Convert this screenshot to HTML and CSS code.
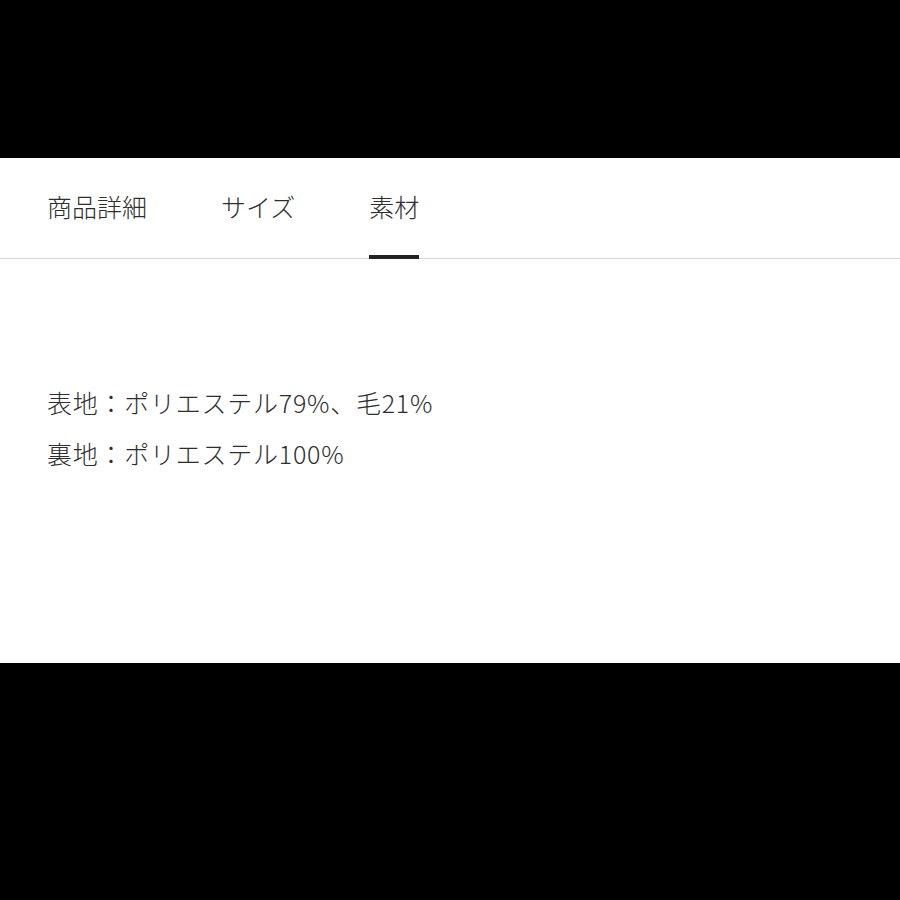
FILE: index.html
```html
<!DOCTYPE html>
<html lang="ja">
<head>
<meta charset="utf-8">
<link rel="stylesheet" href="styles.css">
</head>
<body>
<div class="top"></div>
<div class="panel">
  <div class="tabs">
    <div class="tab">商品詳細</div>
    <div class="tab">サイズ</div>
    <div class="tab active">素材</div>
  </div>
  <div class="content">
    <p class="line">表地：ポリエステル79%、毛21%</p>
    <p class="line">裏地：ポリエステル100%</p>
  </div>
</div>
</body>
</html>
```
FILE: styles.css
```css
html, body {
  margin: 0;
  padding: 0;
  background: #000;
}
body {
  font-family: "Noto Sans CJK JP", "Noto Sans", sans-serif;
  font-weight: 300;
  color: #2e2e2e;
}
.top {
  height: 158px;
}
.panel {
  background: #fff;
  height: 505px;
}
.tabs {
  display: flex;
  gap: 74px;
  padding-left: 47px;
  height: 100px;
  border-bottom: 1px solid #d4d4d4;
}
.tab {
  font-size: 25px;
  line-height: 96px;
  height: 100px;
  position: relative;
}
.tab.active::after {
  content: "";
  position: absolute;
  left: 0;
  right: 0;
  bottom: -1px;
  height: 4px;
  background: #222;
}
.content {
  padding: 118px 0 0 47px;
}
.line {
  margin: 0;
  font-size: 25px;
  letter-spacing: 0.75px;
  line-height: 51px;
}
```
